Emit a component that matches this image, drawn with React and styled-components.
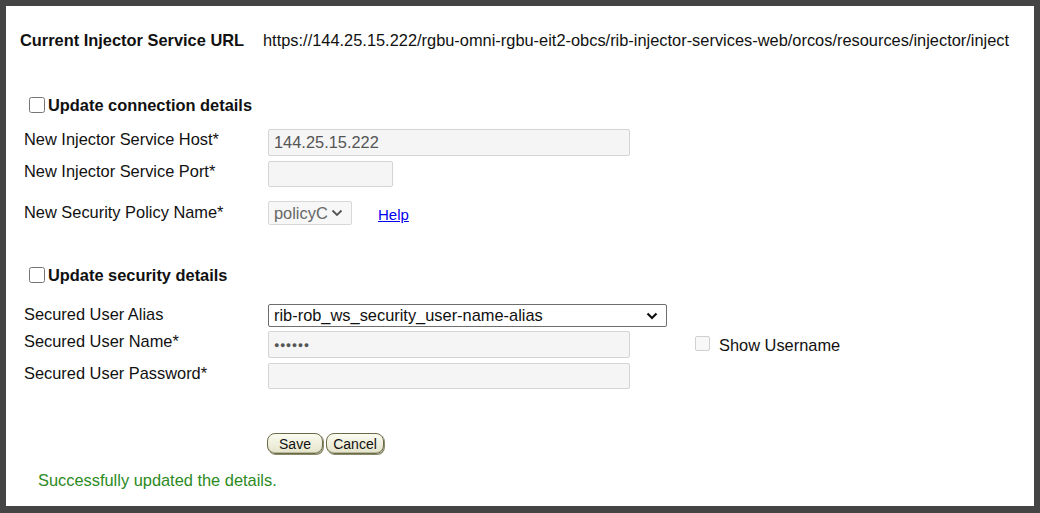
import React from "react";
import styled, { createGlobalStyle } from "styled-components";

const GlobalStyle = createGlobalStyle`
  html, body {
    margin: 0;
    padding: 0;
    background: #444444;
  }
  body {
    font-family: "Liberation Sans", Arial, sans-serif;
    color: #111;
  }
`;

const Frame = styled.div`
  width: 1040px;
  height: 513px;
  box-sizing: border-box;
  border-style: solid;
  border-color: #444444;
  border-width: 6px 6px 7px 6px;
  background: #ffffff;
  display: flex;
  flex-direction: column;
  overflow: hidden;
`;

const HeaderRow = styled.div`
  display: flex;
  align-items: center;
  margin-top: 25px;
  padding-left: 14px;
  height: 18px;
  font-size: 16.4px;
  line-height: 18px;
`;

const HeaderLabel = styled.span`
  font-weight: bold;
  width: 243px;
  flex-shrink: 0;
`;

const UrlText = styled.span`
  white-space: nowrap;
`;

const SectionHeading = styled.label`
  display: flex;
  align-items: center;
  margin-top: ${(p) => p.$top}px;
  padding-left: 18px;
  height: 18px;
  font-size: 16.4px;
  font-weight: bold;
  line-height: 18px;
`;

const Check = styled.input.attrs({ type: "checkbox" })`
  width: 16px;
  height: 16px;
  margin: 0 3px 0 5px;
  accent-color: #444;
`;

const Row = styled.div`
  display: flex;
  align-items: flex-start;
  margin-top: ${(p) => p.$top}px;
  padding-left: 18px;
`;

const Label = styled.div`
  width: 244px;
  flex-shrink: 0;
  font-size: 16.4px;
  line-height: 18px;
  padding-top: ${(p) => p.$pad ?? 1}px;
`;

const TextBox = styled.div`
  box-sizing: border-box;
  width: ${(p) => p.$w}px;
  height: ${(p) => p.$h}px;
  background: #f5f5f5;
  border: 1px solid #d4d4d4;
  border-radius: 2px;
  padding: 0 5px;
  display: flex;
  align-items: center;
  font-size: 16.4px;
  color: #555;
`;

const Dots = styled.span`
  font-size: 9px;
  letter-spacing: 0.5px;
  color: #555;
`;

const SelectBox = styled.div`
  box-sizing: border-box;
  width: ${(p) => p.$w}px;
  height: ${(p) => p.$h}px;
  background: ${(p) => (p.$dark ? "#ffffff" : "#f7f7f7")};
  border: 1px solid ${(p) => (p.$dark ? "#6e6e6e" : "#d8d8d8")};
  border-radius: 2px;
  padding: 0 8px 0 5px;
  display: flex;
  align-items: center;
  justify-content: space-between;
  font-size: 16.4px;
  color: ${(p) => (p.$dark ? "#111" : "#666")};
`;

const HelpLink = styled.a`
  margin-left: 26px;
  margin-top: 5px;
  font-size: 15px;
  color: #0000ee;
  text-decoration: underline;
`;

const ShowUser = styled.label`
  display: flex;
  align-items: center;
  margin-left: 65px;
  margin-top: 5px;
  font-size: 16.4px;
  line-height: 18px;
  gap: 9px;
`;

const DisabledCheck = styled.span`
  box-sizing: border-box;
  width: 15px;
  height: 15px;
  margin-top: -3px;
  border: 1px solid #d0d0d0;
  border-radius: 2px;
  background: #f8f8f8;
`;

const ButtonRow = styled.div`
  display: flex;
  gap: 3px;
  margin-top: 44px;
  padding-left: 261px;
`;

const Button = styled.button`
  box-sizing: border-box;
  width: ${(p) => p.$w}px;
  height: 21px;
  padding: 0;
  font-family: "Liberation Sans", Arial, sans-serif;
  font-size: 14px;
  color: #111;
  border: 1px solid #6b6b4a;
  border-radius: 8px;
  background: linear-gradient(#fbfbf0, #e4e4cc);
  box-shadow: inset 0 -1px 0 #b8b89a, 1px 1px 0 #8a8a6a;
`;

const Message = styled.div`
  margin-top: 17px;
  padding-left: 32px;
  font-size: 16.4px;
  line-height: 18px;
  color: #2b8a22;
`;

const Chevron = ({ bold }) => (
  <svg width="12" height="8" viewBox="0 0 12 8">
    <path
      d="M1.5 1.5 L6 6 L10.5 1.5"
      fill="none"
      stroke={bold ? "#111" : "#555"}
      strokeWidth={bold ? 2.2 : 1.8}
    />
  </svg>
);

export default function App() {
  return (
    <>
      <GlobalStyle />
      <Frame>
        <HeaderRow>
          <HeaderLabel>Current Injector Service URL</HeaderLabel>
          <UrlText>
            https://144.25.15.222/rgbu-omni-rgbu-eit2-obcs/rib-injector-services-web/orcos/resources/injector/inject
          </UrlText>
        </HeaderRow>

        <SectionHeading $top={47}>
          <Check />
          Update connection details
        </SectionHeading>

        <Row $top={15}>
          <Label>New Injector Service Host*</Label>
          <TextBox $w={362} $h={27}>144.25.15.222</TextBox>
        </Row>
        <Row $top={5}>
          <Label>New Injector Service Port*</Label>
          <TextBox $w={125} $h={26} />
        </Row>
        <Row $top={14}>
          <Label $pad={2}>New Security Policy Name*</Label>
          <SelectBox $w={84} $h={24}>
            policyC
            <Chevron />
          </SelectBox>
          <HelpLink href="#">Help</HelpLink>
        </Row>

        <SectionHeading $top={41}>
          <Check />
          Update security details
        </SectionHeading>

        <Row $top={20}>
          <Label>Secured User Alias</Label>
          <SelectBox $w={399} $h={23} $dark>
            rib-rob_ws_security_user-name-alias
            <Chevron bold />
          </SelectBox>
        </Row>
        <Row $top={4}>
          <Label>Secured User Name*</Label>
          <TextBox $w={362} $h={27}>
            <Dots>●●●●●●</Dots>
          </TextBox>
          <ShowUser>
            <DisabledCheck />
            Show Username
          </ShowUser>
        </Row>
        <Row $top={5}>
          <Label>Secured User Password*</Label>
          <TextBox $w={362} $h={26} />
        </Row>

        <ButtonRow>
          <Button $w={56}>Save</Button>
          <Button $w={58}>Cancel</Button>
        </ButtonRow>

        <Message>Successfully updated the details.</Message>
      </Frame>
    </>
  );
}
